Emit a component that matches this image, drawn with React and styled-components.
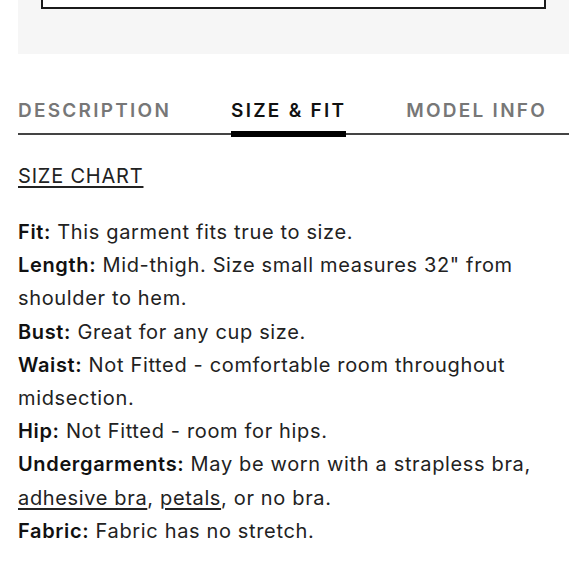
import React from "react";
import styled, { createGlobalStyle } from "styled-components";

const Global = createGlobalStyle`
  html, body { margin: 0; padding: 0; background: #fff; }
  body { font-family: Inter, "Liberation Sans", sans-serif; color: #222; overflow: hidden; }
`;

const Page = styled.div`
  width: 580px;
  height: 580px;
  padding: 0 11px 0 18px;
  box-sizing: border-box;
  overflow: hidden;
`;

const GreyPanel = styled.div`
  height: 54px;
  background: #f6f6f6;
  padding: 0 23px;
  box-sizing: border-box;
`;

const SelectBox = styled.div`
  height: 9px;
  box-sizing: border-box;
  background: #fff;
  border: 2px solid #1a1a1a;
  border-top: none;
`;

const TabBar = styled.div`
  display: flex;
  gap: 60px;
  margin-top: 45px;
  border-bottom: 2px solid #444;
`;

const Tab = styled.div`
  position: relative;
  font-family: Inter, sans-serif;
  font-size: 19px;
  font-weight: 600;
  letter-spacing: 2.25px;
  line-height: 24px;
  padding-bottom: 10px;
  color: ${(p) => (p.$active ? "#111" : "#777")};
  &::after {
    content: "";
    display: ${(p) => (p.$active ? "block" : "none")};
    position: absolute;
    left: 0;
    right: 0;
    bottom: -4px;
    height: 6px;
    background: #000;
  }
`;

const Content = styled.div`
  padding-top: 27px;
`;

const ChartLink = styled.a`
  display: inline-block;
  font-size: 20px;
  letter-spacing: 0.8px;
  line-height: 28px;
  color: #222;
  text-decoration: underline;
  text-underline-offset: 3px;
  text-decoration-thickness: 1.5px;
  margin-bottom: 26px;
`;

const Details = styled.div`
  font-size: 20px;
  line-height: 33.2px;
  letter-spacing: 0.65px;
  color: #222;
`;

const Line = styled.div``;

const Label = styled.strong`
  font-weight: 600;
  color: #111;
`;

const Inline = styled.a`
  color: #222;
  text-decoration: underline;
  text-underline-offset: 3px;
`;

export default function App() {
  return (
    <>
      <Global />
      <Page>
        <GreyPanel>
          <SelectBox />
        </GreyPanel>
        <TabBar>
          <Tab>DESCRIPTION</Tab>
          <Tab $active>SIZE &amp; FIT</Tab>
          <Tab>MODEL INFO</Tab>
        </TabBar>
        <Content>
          <ChartLink>SIZE CHART</ChartLink>
          <Details>
            <Line><Label>Fit:</Label> This garment fits true to size.</Line>
            <Line><Label>Length:</Label> Mid-thigh. Size small measures 32" from shoulder to hem.</Line>
            <Line><Label>Bust:</Label> Great for any cup size.</Line>
            <Line><Label>Waist:</Label> Not Fitted - comfortable room throughout midsection.</Line>
            <Line><Label>Hip:</Label> Not Fitted - room for hips.</Line>
            <Line>
              <Label>Undergarments:</Label> May be worn with a strapless bra,{" "}
              <Inline>adhesive bra</Inline>, <Inline>petals</Inline>, or no bra.
            </Line>
            <Line><Label>Fabric:</Label> Fabric has no stretch.</Line>
          </Details>
        </Content>
      </Page>
    </>
  );
}
